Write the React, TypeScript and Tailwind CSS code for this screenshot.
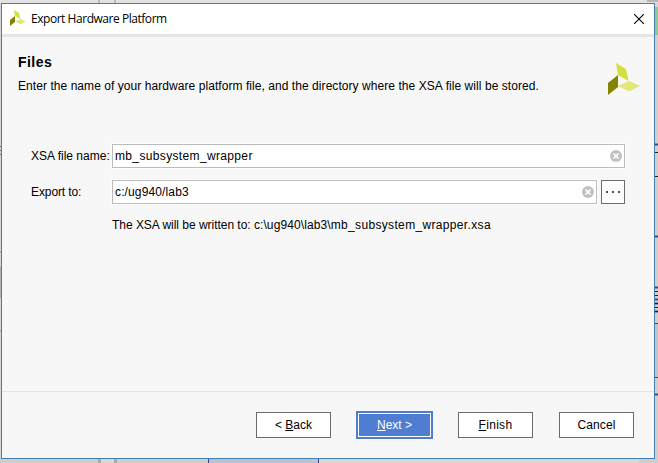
import React from 'react';

function Logo({ className }: { className: string }) {
  return (
    <svg className={className} viewBox="0 0 32 32" aria-hidden="true">
      <path d="M8 0 18 6 20.5 18 10 12Z" fill="#d3df3c" />
      <path d="M0 20 10 12V24L0 32Z" fill="#858300" />
      <path d="M10 23 21 18 32 23 21 28.5Z" fill="#e1e879" />
    </svg>
  );
}

function ClearIcon() {
  return (
    <svg className="size-3 shrink-0" viewBox="0 0 12 12" aria-hidden="true">
      <circle cx="6" cy="6" r="6" fill="#c2c2c2" />
      <path d="m3.5 3.5 5 5m0-5-5 5" stroke="#fff" strokeWidth="1.6" />
    </svg>
  );
}

function Field({ value, className }: { value: string; className: string }) {
  return (
    <div className={`flex h-6 items-center justify-between border border-[#bcbcbc] bg-white pr-[2px] pl-[2px] outline outline-[#fdfdfd] ${className}`}>
      <span>{value}</span>
      <ClearIcon />
    </div>
  );
}

const button = 'flex h-[26px] w-[75px] items-center justify-center border border-[#6b6b6b] bg-white whitespace-pre';

export default function App() {
  return (
    <div className="relative flex h-[463px] w-[658px] overflow-hidden bg-[#d6d6d6] pt-[3px] pl-px font-['Liberation_Sans',Arial,sans-serif] text-[12px] leading-[14px] text-black">
      <svg className="absolute inset-0" width="658" height="463" shapeRendering="crispEdges" aria-hidden="true">
        <path d="M0 0h658v3H0Z" fill="#e2e2e2" />
        <path d="M98 0h2v3h-2ZM114 0h2v3h-2Z" fill="#bcbcbc" />
        <path d="M647 0h11v2h-11Z" fill="#b5b5b5" />
        <path d="M655 7h3v28h-3Z" fill="#8fc796" />
        <path d="M655 35h3v424h-3Z" fill="#cfcfcf" />
        <path d="M655 324h3v53h-3Z" fill="#bdc6cf" />
        <path d="M655 143h3v3h-3ZM655 235h3v3h-3ZM655 286h3v3h-3ZM655 298h3v3h-3ZM655 302h3v3h-3ZM655 310h3v3h-3ZM655 393h3v3h-3Z" fill="#8792ac" />
        <path d="M655 144h3v1h-3ZM655 236h3v1h-3ZM655 287h3v1h-3ZM655 299h3v1h-3ZM655 323h3v1h-3ZM655 377h3v1h-3ZM655 394h3v1h-3Z" fill="#334b83" />
        <path d="M655 152h3v1h-3ZM655 176h3v1h-3ZM655 291h3v1h-3ZM655 295h3v1h-3ZM655 303h3v1h-3ZM655 307h3v1h-3ZM655 311h3v1h-3Z" fill="#202020" />
        <path d="M0 146h1v1H0ZM0 150h1v1H0ZM0 154h1v1H0ZM0 280h1v2H0Z" fill="#75758a" />
        <path d="M0 251h1v2H0ZM0 267h1v31H0ZM0 330h1v2H0Z" fill="#b0b0b0" />
        <path d="M0 459h658v4H0Z" fill="#cecece" />
        <path d="M101 459h13v4h-13ZM319 459h320v4H319Z" fill="#d8d8d8" />
        <path d="M209 459h109v4H209Z" fill="#bcc2ce" />
        <path d="M208 459h1v4h-1ZM318 459h1v4h-1Z" fill="#34457f" />
        <path d="M98 459h3v4h-3ZM114 459h3v4h-3Z" fill="#aaa" />
      </svg>

      <section className="relative flex h-[456px] w-[654px] flex-col border border-[#437fb5] bg-[#f7f7f7]">
        <header className="flex h-[33px] shrink-0 items-center justify-between border-b-[3px] border-[#e6e6e6] bg-white pr-[10px] pl-2">
          <div className="flex items-center gap-[5px]">
            <Logo className="mb-[2px] size-4" />
            <span className="font-['Open_Sans','Noto_Sans',sans-serif] text-[12px] leading-[16px] tracking-[-0.46px]">Export Hardware Platform</span>
          </div>
          <svg className="mb-px size-[10px]" viewBox="0 0 10 10" aria-hidden="true">
            <path d="m0 0 10 10M10 0 0 10" stroke="#000" strokeWidth="1.1" />
          </svg>
        </header>

        <div className="flex h-[107px] shrink-0 justify-between pr-[14px] pl-4">
          <div className="pt-[17px]">
            <h1 className="text-[14px] leading-[16px] font-bold tracking-[0.45px]">Files</h1>
            <p className="mt-[9px] tracking-[0.06px] whitespace-nowrap">Enter the name of your hardware platform file, and the directory where the XSA file will be stored.</p>
          </div>
          <Logo className="mt-[26px] size-8" />
        </div>

        <div className="flex flex-1 flex-col pl-[29px]">
          <div className="flex items-center">
            <span className="w-[81px] whitespace-nowrap">XSA file name:</span>
            <Field value="mb_subsystem_wrapper" className="w-[513px] tracking-[0.35px]" />
          </div>
          <div className="mt-3 flex items-center">
            <span className="w-[81px] tracking-[-0.1px]">Export to:</span>
            <Field value="c:/ug940/lab3" className="w-[485px] tracking-[0.13px]" />
            <button className="ml-1 flex size-6 items-center justify-center gap-1 border border-[#6b6b6b] bg-white">
              <span className="size-[2px] bg-[#505050]" />
              <span className="size-[2px] bg-[#505050]" />
              <span className="size-[2px] bg-[#505050]" />
            </button>
          </div>
          <p className="mt-[14px] ml-[81px] tracking-[-0.03px]">
            The XSA will be written to: <span className="tracking-[0.1px]">c:\ug940\lab3\</span>
            <span className="tracking-[0.34px]">mb_subsystem_wrapper.xsa</span>
          </p>
        </div>

        <footer className="flex h-[67px] shrink-0 items-center border-t border-[#e4e4e4] pl-[254px]">
          <button className={button}>&lt; <u>B</u>ack</button>
          <button className="ml-[25px] flex h-7 w-[77px] items-center justify-center bg-[#4f7dd1] p-[2px] text-white">
            <span className="flex h-full w-full items-center justify-center border border-white whitespace-pre"><u>N</u>ext &gt;</span>
          </button>
          <button className={`ml-[25px] tracking-[0.3px] ${button}`}><u>F</u>inish</button>
          <button className={`ml-[26px] tracking-[0.1px] ${button}`}>Cancel</button>
        </footer>
      </section>
    </div>
  );
}
